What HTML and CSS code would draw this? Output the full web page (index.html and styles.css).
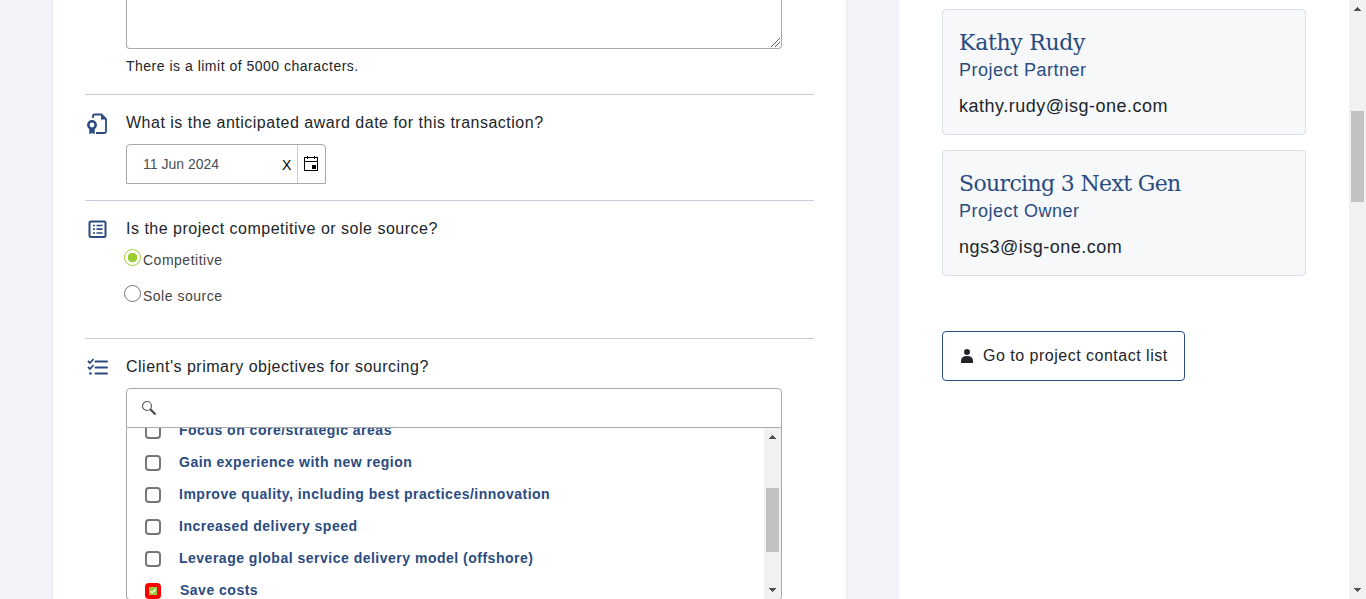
FILE: index.html
```
<!DOCTYPE html>
<html lang="en">
<head>
<meta charset="utf-8">
<title>Project details</title>
<link rel="stylesheet" href="styles.css">
</head>
<body>
<div class="page">
  <main class="panel">
    <section class="question question-comment">
      <div class="field">
        <div class="textarea">
          <svg class="grip" width="9" height="9" viewBox="0 0 9 9" shape-rendering="crispEdges"><path d="M0 8h1v1H0zM1 7h1v1H1zM2 6h1v1H2zM3 5h1v1H3zM4 4h1v1H4zM5 3h1v1H5zM6 2h1v1H6zM7 1h1v1H7zM8 0h1v1H8zM4 8h1v1H4zM5 7h1v1H5zM6 6h1v1H6zM7 5h1v1H7zM8 4h1v1H8z" fill="#555"/></svg>
        </div>
        <p class="hint">There is a limit of 5000 characters.</p>
      </div>
    </section>

    <section class="question question-date">
      <svg class="icon" width="24" height="24" viewBox="0 0 24 24" fill="none" stroke="#2a4b80" stroke-width="1.800">
        <path d="M6 6V4Q6 2.500 7.500 2.500H14.500L19 7V19.500Q19 21 17.500 21H9"/>
        <path d="M14 1.800V7.500H19.800Z" fill="#2a4b80" stroke="none"/>
        <circle cx="5" cy="13" r="3.700" stroke-width="2.500"/>
        <path d="M2.300 16V22.300L5 21L7.700 22.300V16Z" fill="#2a4b80" stroke="none"/>
      </svg>
      <div class="field">
        <h2 class="label">What is the anticipated award date for this transaction?</h2>
        <div class="date">
          <span class="date-value">11 Jun 2024</span>
          <span class="date-clear">X</span>
          <span class="date-button">
            <svg width="16" height="16" viewBox="0 0 16 16" shape-rendering="crispEdges"><path d="M1 1h14v14H1zM2 2v3h12V2zM2 6v8h12V6z" fill="#000" fill-rule="evenodd"/><path d="M4 0h1v3H4zM11 0h1v3h-1zM3 1h3v1H3zM10 1h3v1h-3zM9 9h4v4H9z" fill="#000"/></svg>
          </span>
        </div>
      </div>
    </section>

    <section class="question question-type">
      <svg class="icon" width="24" height="24" viewBox="0 0 24 24" fill="none" stroke="#2a4b80" stroke-width="2">
        <rect x="2.500" y="4.500" width="16" height="15.500" rx="1.500"/>
        <path d="M6 8.500h2M6 12.200h2M6 16h2M9.500 8.500h6M9.500 12.200h6M9.500 16h6" stroke-width="1.700"/>
      </svg>
      <div class="field">
        <h2 class="label">Is the project competitive or sole source?</h2>
        <div class="radios">
          <div class="radio"><span class="dot dot-on"></span><span>Competitive</span></div>
          <div class="radio"><span class="dot"></span><span>Sole source</span></div>
        </div>
      </div>
    </section>

    <section class="question question-goals">
      <svg class="icon" width="24" height="24" viewBox="0 0 24 24" fill="none" stroke="#2a4b80" stroke-width="2">
        <path d="M8.500 5.500h11.500M8.500 11.500h11.500M8.500 17.500h11.500" stroke-linecap="round"/>
        <path d="M1 5l2 2l3.500-4M1 11l2 2l3.500-4" stroke-width="1.800"/>
        <circle cx="3.500" cy="17.500" r="1.300" fill="#2a4b80" stroke="none"/>
      </svg>
      <div class="field">
        <h2 class="label">Client's primary objectives for sourcing?</h2>
        <div class="search">
          <svg width="16" height="16" viewBox="0 0 16 16" fill="none"><circle cx="6" cy="6" r="4.500" stroke="#555" stroke-width="1.100"/><path d="M9.300 9.300L14.500 14.500" stroke="#444" stroke-width="2"/></svg>
        </div>
        <div class="list">
          <ul class="options">
            <li class="option"><span class="box"></span>Focus on core/strategic areas</li>
            <li class="option"><span class="box"></span>Gain experience with new region</li>
            <li class="option"><span class="box"></span>Improve quality, including best practices/innovation</li>
            <li class="option"><span class="box"></span>Increased delivery speed</li>
            <li class="option"><span class="box"></span>Leverage global service delivery model (offshore)</li>
            <li class="option option-on"><span class="box box-on"><svg width="8" height="8" viewBox="0 0 8 8"><rect width="8" height="8" fill="#9acd32"/><path d="M1.500 4.200L3.200 5.800L6.500 2.300" fill="none" stroke="#fff" stroke-width="1.300"/></svg></span>Save costs</li>
          </ul>
          <div class="bar list-bar">
            <svg class="arrow" width="7" height="4" viewBox="0 0 7 4" shape-rendering="crispEdges"><path d="M3 0h1v1h1v1h1v1h1v1H0V3h1V2h1V1h1z" fill="#505050"/></svg>
            <div class="thumb"></div>
            <svg class="arrow" width="7" height="4" viewBox="0 0 7 4" shape-rendering="crispEdges"><path d="M3 4h1V3h1V2h1V1h1V0H0v1h1v1h1v1h1z" fill="#505050"/></svg>
          </div>
        </div>
      </div>
    </section>
  </main>

  <aside class="contacts">
    <article class="card">
      <h3 class="name">Kathy Rudy</h3>
      <p class="role">Project Partner</p>
      <p class="mail">kathy.rudy@isg-one.com</p>
    </article>
    <article class="card">
      <h3 class="name name-long">Sourcing 3 Next Gen</h3>
      <p class="role">Project Owner</p>
      <p class="mail">ngs3@isg-one.com</p>
    </article>
    <a class="button">
      <svg width="12" height="14" viewBox="0 0 12 14" fill="#212529"><circle cx="6" cy="3" r="3"/><path d="M0 14V12Q0 7 6 7T12 12V14Z"/></svg>
      <span>Go to project contact list</span>
    </a>
  </aside>

  <div class="bar page-bar">
    <svg class="arrow" width="7" height="4" viewBox="0 0 7 4" shape-rendering="crispEdges"><path d="M3 0h1v1h1v1h1v1h1v1H0V3h1V2h1V1h1z" fill="#505050"/></svg>
    <div class="thumb"></div>
    <svg class="arrow" width="7" height="4" viewBox="0 0 7 4" shape-rendering="crispEdges"><path d="M3 4h1V3h1V2h1V1h1V0H0v1h1v1h1v1h1z" fill="#505050"/></svg>
  </div>
</div>
</body>
</html>
```
FILE: styles.css
```
* { box-sizing: border-box; }
body, h2, h3, p, ul { margin: 0; padding: 0; }
body {
  font-family: "Liberation Sans", Arial, sans-serif;
  letter-spacing: 0.5px;
  color: #212529;
  background: #f1f3f8;
  overflow: hidden;
}
.page {
  display: grid;
  grid-template-columns: 795px 502px 17px;
  padding-left: 52px;
  height: 599px;
  overflow: hidden;
}
.panel {
  background: #fff;
  border: solid #e8e9eb;
  border-width: 0 1px;
  padding: 0 32px;
  min-height: 0;
}
.question {
  display: flex;
  padding: 16px 32px 0 0;
  border-bottom: 1px solid #c6cee0;
}
.icon { flex: none; width: 24px; height: 24px; margin: 1px -2px 0 2px; }
.field { flex: none; width: 656px; margin-left: 17px; }
.question-comment { height: 95px; padding-top: 0; }
.question-comment .field { margin-left: 41px; }
.question-date { height: 106px; }
.question-type { height: 138px; }
.question-type .icon { margin-top: 0; }
.question-goals { height: 280px; border-bottom: 0; }
.label { font-size: 16px; font-weight: 400; line-height: 24px; }

.textarea {
  display: flex;
  justify-content: flex-end;
  align-items: flex-end;
  height: 49px;
  padding: 0 1px 1px 0;
  border: 1px solid #aaa;
  border-top: 0;
  border-radius: 0 0 4px 4px;
}
.hint { font-size: 14px; line-height: 20px; margin-top: 7px; }

.date {
  display: flex;
  align-items: stretch;
  width: 200px;
  height: 40px;
  margin-top: 9px;
  border: 1px solid #aaa;
  border-radius: 4px 4px 0 0;
}
.date span { display: flex; align-items: center; }
.date-value { width: 151px; padding-left: 16px; font-size: 14px; letter-spacing: 0; color: #495057; }
.date-clear { width: 19px; padding: 2px 0 0 4px; font-size: 14px; color: #000; }
.date-button { flex: 1; padding-left: 5px; border-left: 1px solid #ccc; }

.radios { margin: 7px 0 0 -2px; }
.radio {
  display: flex;
  height: 36px;
  gap: 2px;
  font-size: 14px;
  line-height: 20px;
  color: #444;
}
.radio span:last-child { padding-top: 2px; }
.dot { width: 17px; height: 17px; margin-top: 1px; border: 1px solid #767676; border-radius: 50%; }
.dot-on { border: 1px solid #9acd32; background: radial-gradient(circle, #9acd32 4.5px, #fff 5px); }

.search {
  height: 40px;
  margin-top: 9px;
  padding: 11px 14px;
  border: 1px solid #aaa;
  border-radius: 4px 4px 0 0;
}
.list {
  display: flex;
  height: 172px;
  border: solid #aaa;
  border-width: 0 1px 1px;
  border-radius: 0 0 4px 4px;
  overflow: hidden;
}
.options { flex: 1; margin-top: -14px; padding-left: 18px; list-style: none; }
.option {
  display: flex;
  align-items: center;
  height: 32px;
  font-size: 14px;
  font-weight: 700;
  letter-spacing: 0.5px;
  color: #2a4b80;
}
.box {
  display: flex;
  align-items: center;
  justify-content: center;
  width: 16px;
  height: 16px;
  margin: 2px 18px 0 0;
  border: 2px solid #767676;
  border-radius: 4px;
}
.box-on { margin-right: 19px; border-color: #f00; background: #f00; }

.bar {
  display: flex;
  flex-direction: column;
  align-items: center;
  width: 17px;
  padding-top: 7px;
  background: #f1f1f1;
}
.thumb { width: 13px; background: #c1c1c1; }
.arrow { flex: none; width: 7px; height: 4px; }
.list-bar .thumb { height: 64px; margin: 49px 0 36px; }
.page-bar .thumb { height: 91px; margin: 100px 0 386px; }

.contacts { margin-left: 52px; background: #fff; padding: 9px 43px 0; }
.card {
  height: 126px;
  margin-bottom: 15px;
  padding: 17px 17px 0 16px;
  background: #f6f8fa;
  border: 1px solid #d8dee8;
  border-radius: 4px;
}
.name {
  font-family: "Roboto Slab", "DejaVu Serif", serif;
  font-size: 22px;
  font-weight: 400;
  line-height: 32px;
  letter-spacing: -0.3px;
  color: #2a4b80;
}
.name-long { letter-spacing: -0.65px; }
.role { font-size: 18px; line-height: 24px; margin-top: -1px; color: #2a4b80; }
.mail { font-size: 18px; line-height: 24px; margin-top: 12px; }
.button {
  display: flex;
  align-items: center;
  gap: 10px;
  width: 243px;
  height: 50px;
  margin-top: 55px;
  padding: 0 0 1px 18px;
  border: 1px solid #2a4b80;
  border-radius: 4px;
  font-size: 16px;
}
```
